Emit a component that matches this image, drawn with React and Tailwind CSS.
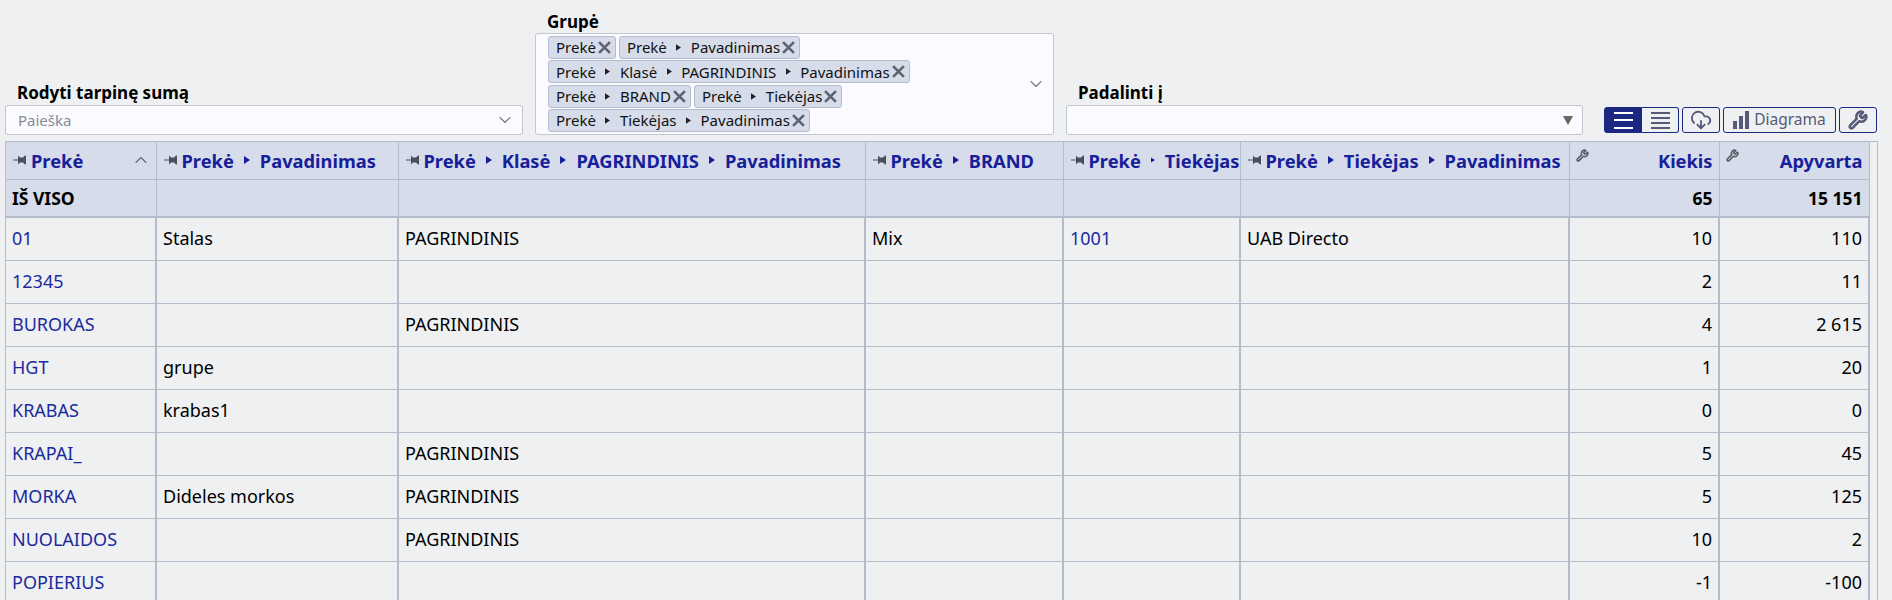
import React from "react";
import { ChevronDown, ChevronUp, CloudDownload, Wrench } from "lucide-react";

const font = "font-['Noto_Sans','Liberation_Sans',sans-serif]";

const Tri = ({ className = "" }) => (
  <svg viewBox="0 0 6 8" className={`inline-block w-[6px] h-[8px] mx-[10px] fill-current ${className}`}>
    <path d="M0 0 L6 4 L0 8 Z" />
  </svg>
);

const Pin = () => (
  <svg viewBox="0 0 14 10" className="w-[14px] h-[10px] mr-[4px] shrink-0 fill-[#4a4f5c]">
    <path d="M0 4.4 H5 V5.6 H0 Z M5 0.5 L7 2.5 H10 L12 0.5 H13 V9.5 H12 L10 7.5 H7 L5 9.5 Z" />
  </svg>
);

const Cross = () => (
  <svg viewBox="0 0 12 12" className="w-[13px] h-[13px] ml-[2px] stroke-[#5d6270] fill-none" strokeWidth="2.4">
    <path d="M1 1 L11 11 M11 1 L1 11" />
  </svg>
);

const Chip = ({ parts }) => (
  <span className="inline-flex items-center h-[23px] pl-[7px] pr-[4px] bg-[#d6dcea] border border-[#b4bccc] rounded-[3px] text-[15px] text-[#111]">
    {parts.map((p, i) => (
      <React.Fragment key={i}>
        {i > 0 && <Tri className="!w-[5px] !h-[7px] !mx-[9.5px] text-[#222]" />}
        {p}
      </React.Fragment>
    ))}
    <Cross />
  </span>
);

const chipRows = [
  [["Prekė"], ["Prekė", "Pavadinimas"]],
  [["Prekė", "Klasė", "PAGRINDINIS", "Pavadinimas"]],
  [["Prekė", "BRAND"], ["Prekė", "Tiekėjas"]],
  [["Prekė", "Tiekėjas", "Pavadinimas"]],
];

const colWidths = ["w-[150px]", "w-[242px]", "w-[467px]", "w-[198px]", "w-[177px]", "w-[329px]", "w-[150px]", "w-[150px]"];

const headers = [
  ["Prekė"],
  ["Prekė", "Pavadinimas"],
  ["Prekė", "Klasė", "PAGRINDINIS", "Pavadinimas"],
  ["Prekė", "BRAND"],
  ["Prekė", "Tiekėjas"],
  ["Prekė", "Tiekėjas", "Pavadinimas"],
];

const rows = [
  ["01", "Stalas", "PAGRINDINIS", "Mix", "1001", "UAB Directo", "10", "110"],
  ["12345", "", "", "", "", "", "2", "11"],
  ["BUROKAS", "", "PAGRINDINIS", "", "", "", "4", "2 615"],
  ["HGT", "grupe", "", "", "", "", "1", "20"],
  ["KRABAS", "krabas1", "", "", "", "", "0", "0"],
  ["KRAPAI_", "", "PAGRINDINIS", "", "", "", "5", "45"],
  ["MORKA", "Dideles morkos", "PAGRINDINIS", "", "", "", "5", "125"],
  ["NUOLAIDOS", "", "PAGRINDINIS", "", "", "", "10", "2"],
  ["POPIERIUS", "", "", "", "", "", "-1", "-100"],
];

const ToolBtn = ({ className = "", children }) => (
  <button className={`h-[26px] flex items-center justify-center border border-[#1b2a80] rounded-[3px] bg-[#eef0f2] text-[#555a78] ${className}`}>
    {children}
  </button>
);

const Lines = ({ n, color }) => (
  <span className="flex flex-col justify-between w-[19px] h-[17px]">
    {Array.from({ length: n }).map((_, i) => (
      <span key={i} className={`block h-[2px] ${color}`} />
    ))}
  </span>
);

export default function App() {
  return (
    <div className={`h-[600px] overflow-hidden bg-[#eef0f2] text-[18px] text-black ${font}`}>
      <div className="flex items-end h-[135px] pl-[5px]">
        <div className="w-[518px] mr-[12px]">
          <div className="h-[20px] mb-[2px] pl-[12px] text-[17px] leading-[20px] font-bold">Rodyti tarpinę sumą</div>
          <div className="flex items-center justify-between h-[30px] pl-[12px] pr-[7px] bg-[#fbfbff] border border-[#c0c6d3] rounded-[3px]">
            <span className="text-[15px] text-[#868b95]">Paieška</span>
            <ChevronDown className="w-[20px] h-[20px] text-[#777c88]" strokeWidth={1.4} />
          </div>
        </div>
        <div className="w-[519px] mr-[12px]">
          <div className="h-[20px] mb-[1px] pl-[12px] text-[17px] leading-[20px] font-bold">Grupė</div>
          <div className="flex items-center h-[102px] pl-[12px] pr-[7px] bg-[#fbfbff] border border-[#c0c6d3] rounded-[3px]">
            <div className="flex-1 flex flex-col gap-[1.4px]">
              {chipRows.map((row, i) => (
                <div key={i} className="flex gap-[3px]">
                  {row.map((parts, j) => (
                    <Chip key={j} parts={parts} />
                  ))}
                </div>
              ))}
            </div>
            <ChevronDown className="w-[20px] h-[20px] text-[#777c88]" strokeWidth={1.4} />
          </div>
        </div>
        <div className="w-[517px] mr-[21px]">
          <div className="h-[20px] mb-[2px] pl-[12px] text-[17px] leading-[20px] font-bold">Padalinti į</div>
          <div className="flex items-center justify-end h-[30px] pr-[9px] bg-[#fbfbff] border border-[#c0c6d3] rounded-[3px]">
            <span className="w-0 h-0 border-x-[5px] border-x-transparent border-t-[9px] border-t-[#666]" />
          </div>
        </div>
        <div className="flex items-center gap-[3px] mb-[2px]">
          <div className="flex">
            <ToolBtn className="w-[38px] !rounded-r-none !bg-[#1b2780]">
              <Lines n={3} color="bg-white" />
            </ToolBtn>
            <ToolBtn className="w-[37px] !rounded-l-none border-l-0">
              <Lines n={4} color="bg-[#555a78]" />
            </ToolBtn>
          </div>
          <ToolBtn className="w-[38px]">
            <CloudDownload className="w-[22px] h-[22px]" strokeWidth={2} />
          </ToolBtn>
          <ToolBtn className="w-[113px] gap-[5px] text-[15.5px]">
            <span className="flex items-end gap-[2px] h-[18px]">
              <span className="w-[4px] h-[8px] bg-[#555a78]" />
              <span className="w-[4px] h-[13px] bg-[#555a78]" />
              <span className="w-[4px] h-[18px] bg-[#555a78]" />
            </span>
            Diagrama
          </ToolBtn>
          <ToolBtn className="w-[38px]">
            <Wrench className="w-[20px] h-[20px] -scale-x-100 rotate-90" strokeWidth={3} />
          </ToolBtn>
        </div>
      </div>

      <div className="ml-[5px] mt-[6px] w-[1873px] border-l border-r border-t border-[#b4bccc]">
        <table className="table-fixed w-[1863px] border-collapse">
          <colgroup>
            {colWidths.map((w, i) => (
              <col key={i} className={w} />
            ))}
          </colgroup>
          <thead>
            <tr className="h-[37px] bg-[#d6dcea]">
              {headers.map((parts, i) => (
                <th key={i} className="border-r border-b border-[#b4bccc] pl-[7px] text-left text-[18.3px] font-bold text-[#16209a] overflow-hidden whitespace-nowrap">
                  <div className="flex items-center">
                    <Pin />
                    {parts.map((p, j) => (
                      <React.Fragment key={j}>
                        {j > 0 && <Tri />}
                        {p}
                      </React.Fragment>
                    ))}
                    {i === 0 && <ChevronUp className="ml-auto mr-[5px] w-[20px] h-[20px] text-[#666b78]" strokeWidth={1.4} />}
                  </div>
                </th>
              ))}
              {["Kiekis", "Apyvarta"].map((h) => (
                <th key={h} className="border-r border-b border-[#b4bccc] px-[6px] text-[18.3px] font-bold text-[#16209a]">
                  <div className="flex items-start justify-between">
                    <Wrench className="w-[13px] h-[13px] mt-[2px] text-[#5a5e68] -scale-x-100 rotate-90" strokeWidth={3} />
                    {h}
                  </div>
                </th>
              ))}
            </tr>
            <tr className="h-[38px] bg-[#d6dcea] text-[17.5px] font-bold">
              <td className="border-r border-b-2 border-[#b4bccc] px-[6px]">IŠ VISO</td>
              {[0, 1, 2, 3, 4].map((i) => (
                <td key={i} className="border-r border-b-2 border-[#b4bccc]" />
              ))}
              <td className="border-r border-b-2 border-[#b4bccc] px-[6px] text-right">65</td>
              <td className="border-r border-b-2 border-[#b4bccc] px-[6px] text-right">15 151</td>
            </tr>
          </thead>
          <tbody>
            {rows.map((row) => (
              <tr key={row[0]} className="h-[43px]">
                {row.map((cell, i) => {
                  const isLink = i === 0 || i === 4;
                  const isNum = i >= 6;
                  return (
                    <td
                      key={i}
                      className={`border-r-2 border-b border-[#b4bccc] px-[6px] ${isLink ? "text-[#1c2a9c]" : ""} ${isNum ? "text-right" : ""}`}
                    >
                      {cell}
                    </td>
                  );
                })}
              </tr>
            ))}
          </tbody>
        </table>
      </div>
    </div>
  );
}
